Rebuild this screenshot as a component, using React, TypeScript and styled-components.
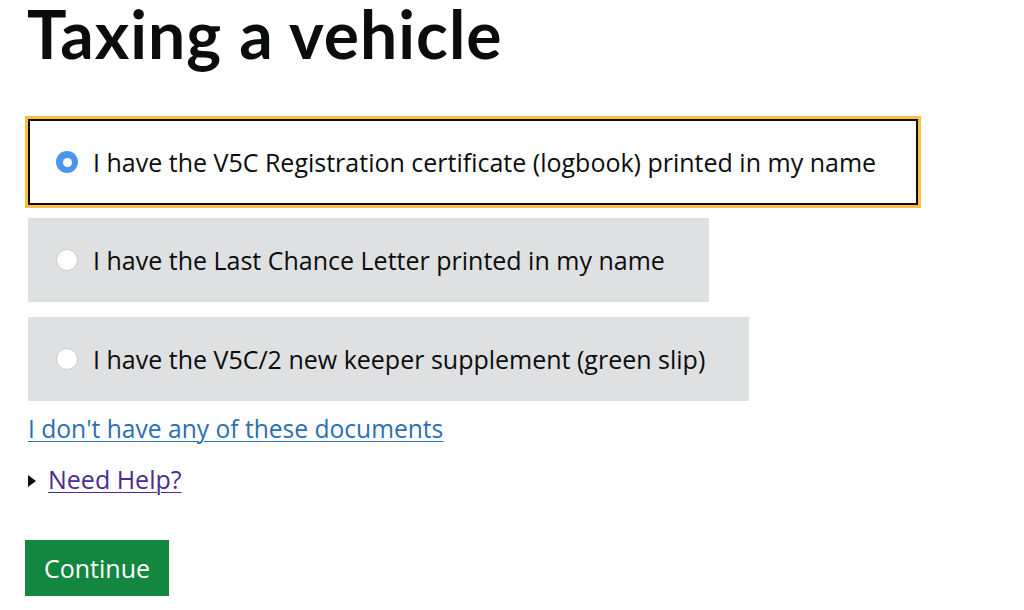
import React, { useState } from 'react';
import styled, { createGlobalStyle } from 'styled-components';

const GlobalStyle = createGlobalStyle`
  html, body {
    margin: 0;
    padding: 0;
    background: #ffffff;
    font-family: 'Open Sans', 'Liberation Sans', sans-serif;
    color: #0b0c0c;
  }
`;

const Page = styled.main`
  padding: 0 0 0 28px;
  width: 1024px;
  box-sizing: border-box;
`;

const Heading = styled.h1`
  margin: 0 0 0 -1px;
  font-family: Lato, 'Open Sans', sans-serif;
  font-size: 66px;
  line-height: 68px;
  font-weight: 700;
  letter-spacing: 1px;
  height: 119px;
`;

const Options = styled.div`
  display: flex;
  flex-direction: column;
  align-items: flex-start;
`;

const Option = styled.label<{ selected: boolean }>`
  display: flex;
  align-items: center;
  gap: 15px;
  box-sizing: border-box;
  height: ${({ selected }) => (selected ? '86px' : '84px')};
  margin-bottom: ${({ selected }) => (selected ? '13px' : '15px')};
  padding: 0 ${({ selected }) => (selected ? '40px' : '44px')} 0
    ${({ selected }) => (selected ? '26px' : '28px')};
  background: ${({ selected }) => (selected ? '#ffffff' : '#dee0e2')};
  border: ${({ selected }) => (selected ? '2px solid #0b0c0c' : 'none')};
  outline: ${({ selected }) => (selected ? '3px solid #ffbf47' : 'none')};
  font-size: 25px;
  line-height: 30px;
  cursor: pointer;

  &:last-child {
    margin-bottom: 0;
  }
`;

const HiddenInput = styled.input`
  position: absolute;
  opacity: 0;
  width: 0;
  height: 0;
`;

const RadioMark = styled.span<{ checked: boolean }>`
  flex: none;
  width: 22px;
  height: 22px;
  border-radius: 50%;
  box-sizing: border-box;
  background: ${({ checked }) => (checked ? '#4b95ec' : '#ffffff')};
  border: ${({ checked }) => (checked ? 'none' : '1.5px solid #cbcbcb')};
  display: flex;
  align-items: center;
  justify-content: center;

  &::after {
    content: '';
    display: ${({ checked }) => (checked ? 'block' : 'none')};
    width: 9px;
    height: 9px;
    border-radius: 50%;
    background: #ffffff;
  }
`;

const DocsLink = styled.a`
  display: block;
  width: fit-content;
  margin-top: 13px;
  font-size: 24.6px;
  line-height: 30px;
  color: #2b6fb3;
  text-decoration: underline;
  text-underline-offset: 3px;
  text-decoration-thickness: 1px;
`;

const Details = styled.div`
  display: flex;
  align-items: center;
  gap: 12px;
  margin-top: 20px;
  font-size: 25px;
  line-height: 30px;
`;

const Triangle = styled.span`
  width: 0;
  height: 0;
  border-top: 6px solid transparent;
  border-bottom: 6px solid transparent;
  border-left: 8px solid #0b0c0c;
  margin-top: 4px;
`;

const HelpLink = styled.a`
  color: #4c2c92;
  text-decoration: underline;
  text-underline-offset: 3px;
  text-decoration-thickness: 1px;
`;

const ContinueButton = styled.button`
  display: block;
  margin: 46px 0 0 -3px;
  width: 144px;
  height: 56px;
  padding: 0;
  border: none;
  background: #13873f;
  color: #ffffff;
  font-family: 'Open Sans', 'Liberation Sans', sans-serif;
  font-size: 25px;
  box-shadow: 0 3px 0 #003618;
  cursor: pointer;
`;

const options = [
  'I have the V5C Registration certificate (logbook) printed in my name',
  'I have the Last Chance Letter printed in my name',
  'I have the V5C/2 new keeper supplement (green slip)',
];

export default function App() {
  const [selected, setSelected] = useState(0);

  return (
    <>
      <GlobalStyle />
      <Page>
        <Heading>Taxing a vehicle</Heading>
        <Options>
          {options.map((text, i) => (
            <Option key={text} selected={selected === i}>
              <HiddenInput
                type="radio"
                name="document"
                checked={selected === i}
                onChange={() => setSelected(i)}
              />
              <RadioMark checked={selected === i} />
              <span>{text}</span>
            </Option>
          ))}
        </Options>
        <DocsLink href="#">I don't have any of these documents</DocsLink>
        <Details>
          <Triangle />
          <HelpLink href="#">Need Help?</HelpLink>
        </Details>
        <ContinueButton>Continue</ContinueButton>
      </Page>
    </>
  );
}
